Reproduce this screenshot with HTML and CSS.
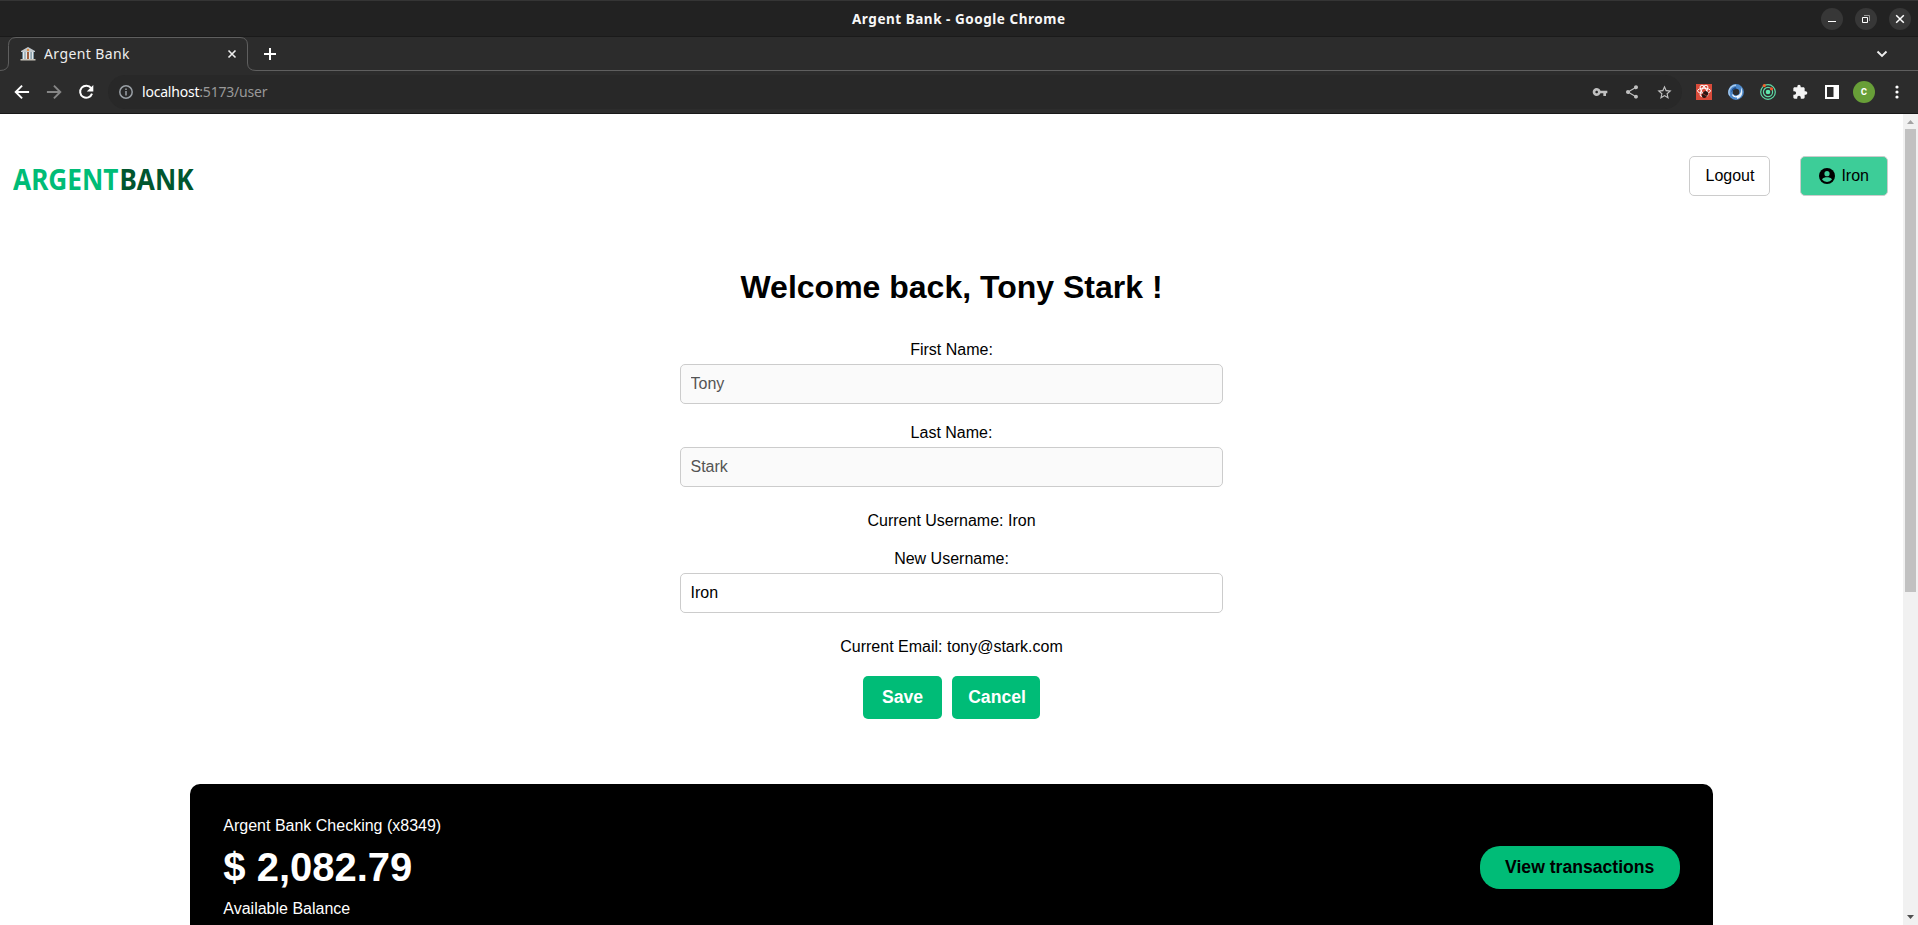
FILE: index.html
```html
<!DOCTYPE html>
<html lang="en">
<head>
<meta charset="utf-8">
<title>Argent Bank</title>
<link rel="stylesheet" href="styles.css">
</head>
<body>
<div class="window">
  <header class="titlebar">
    <svg class="window-title" width="216" height="24"><text x="1" y="17" textLength="213">Argent Bank - Google Chrome</text></svg>
    <div class="window-controls">
      <svg width="22" height="22" viewBox="0 0 22 22"><circle cx="11" cy="11" r="11" fill="#373737"/><path d="M7 13.5h8" stroke="#fff"/></svg>
      <svg width="22" height="22" viewBox="0 0 22 22"><circle cx="11" cy="11" r="11" fill="#373737"/><path d="M7.500 9.500h5v5h-5z" fill="none" stroke="#fff"/><path d="M9 7.500h5.500v5.500" fill="none" stroke="#999"/></svg>
      <svg width="22" height="22" viewBox="0 0 22 22"><circle cx="11" cy="11" r="11" fill="#373737"/><path d="M7.200 7.200l7.600 7.600M14.800 7.200l-7.600 7.600" stroke="#fff" stroke-width="1.500"/></svg>
    </div>
  </header>

  <div class="tabstrip">
    <svg class="tab-outline" width="1918" height="35" viewBox="0 0 1918 35"><path d="M0 33.500Q8.500 33.500 8.500 26V8.500Q8.500 .5 16 .5H240Q247.500 .5 247.500 8V26Q247.500 33.500 256 33.500H1918" fill="none" stroke="#5f5f5f"/></svg>
    <div class="tab">
      <svg width="16" height="16" viewBox="0 0 16 16"><path d="M8 1L1 5v1h14V5z" fill="#c3cace"/><path d="M2 6h12v7H2z" fill="#6b8796"/><path d="M3 6h1.500v7H3zM5.500 6H7v7H5.500zM9 6h1.500v7H9zM11.700 6h1.500v7h-1.500z" fill="#e4e8e8"/><path d="M7 6h2v7H7z" fill="#a0603f"/><circle cx="8" cy="4" r="1.200" fill="#e08a3c"/><path d="M.5 13h15v1.500H.5z" fill="#c6c2b8"/></svg>
      <svg class="tab-title" width="90" height="22"><text x="0" y="16" textLength="85.500">Argent Bank</text></svg>
      <svg class="tab-close" width="10" height="10" viewBox="0 0 10 10"><path d="M1.500 1.500l7 7M8.500 1.500l-7 7" stroke="#eee" stroke-width="1.600"/></svg>
    </div>
    <svg class="new-tab" width="14" height="14" viewBox="0 0 14 14"><path d="M7 1v12M1 7h12" stroke="#fff" stroke-width="2"/></svg>
    <svg class="tab-search" width="12" height="8" viewBox="0 0 12 8"><path d="M1.500 1.500L6 6l4.500-4.500" fill="none" stroke="#eee" stroke-width="1.900"/></svg>
  </div>

  <div class="toolbar">
    <div class="nav-icons">
      <svg width="20" height="20" viewBox="0 0 24 24"><path fill="#fff" d="M20.500 10.800H7.300l5.600-5.600L11.300 3.500 2.800 12l8.500 8.500 1.600-1.700-5.600-5.600h13.200z"/></svg>
      <svg width="20" height="20" viewBox="0 0 24 24"><path fill="#868686" d="M3.500 10.800h13.200l-5.600-5.600 1.600-1.700 8.500 8.500-8.500 8.500-1.600-1.700 5.600-5.600H3.500z"/></svg>
      <svg width="20" height="20" viewBox="0 0 24 24"><path d="M18.200 7.400A7.300 7.300 0 1 0 19.200 14" fill="none" stroke="#fff" stroke-width="2.400"/><path d="M20.800 3.500v7.900h-7.900z" fill="#fff"/></svg>
    </div>
    <div class="omnibox">
      <svg width="14" height="14" viewBox="0 0 14 14"><circle cx="7" cy="7" r="6.200" fill="none" stroke="#9aa0a6" stroke-width="1.500"/><path d="M7 6v4.500M7 3.400v1.500" stroke="#9aa0a6" stroke-width="1.500"/></svg>
      <svg class="url" width="130" height="24"><text x="1" y="17" textLength="125.500"><tspan fill="#fff">localhost</tspan><tspan>:5173/user</tspan></text></svg>
      <div class="omnibox-actions">
        <svg width="16" height="16" viewBox="0 0 24 24"><path fill="#c0c0c0" d="M12.700 10C11.800 7.700 9.600 6 7 6c-3.300 0-6 2.700-6 6s2.700 6 6 6c2.600 0 4.800-1.700 5.700-4H17v4h4v-4h2v-4zM7 14c-1.100 0-2-.9-2-2s.9-2 2-2 2 .9 2 2-.9 2-2 2z"/></svg>
        <svg width="16" height="16" viewBox="0 0 24 24"><path fill="#c0c0c0" d="M18 16.100c-.8 0-1.400.3-2 .8l-7.100-4.200c.1-.5.100-.9 0-1.400L16 7.200c.5.500 1.200.8 2 .8 1.700 0 3-1.300 3-3s-1.300-3-3-3-3 1.300-3 3c0 .2 0 .5.100.7L8 9.800C7.500 9.300 6.800 9 6 9c-1.700 0-3 1.300-3 3s1.300 3 3 3c.8 0 1.500-.3 2-.8l7.100 4.200c0 .2-.1.400-.1.600 0 1.600 1.300 2.900 3 2.900s2.900-1.300 2.900-2.900-1.300-2.900-2.900-2.900z"/></svg>
        <svg width="17" height="17" viewBox="0 0 24 24"><path fill="#c0c0c0" d="M22 9.240l-7.190-.62L12 2 9.190 8.630 2 9.240l5.460 4.730L5.820 21 12 17.270 18.180 21l-1.630-7.030zM12 15.400l-3.760 2.270 1-4.280-3.320-2.880 4.380-.38L12 6.100l1.710 4.040 4.380.38-3.320 2.880 1 4.280z"/></svg>
      </div>
    </div>
    <div class="extensions">
      <svg width="16" height="16" viewBox="0 0 16 16"><path d="M0 0h16v16H0z" fill="#d94b3a"/><g fill="none" stroke="#fff" stroke-width="1"><ellipse cx="8" cy="6.800" rx="6.500" ry="2.600"/><ellipse cx="8" cy="6.800" rx="6" ry="2.500" transform="rotate(60 8 6.800)"/><ellipse cx="8" cy="6.800" rx="6" ry="2.500" transform="rotate(-60 8 6.800)"/></g><ellipse cx="9" cy="10.500" rx="2.700" ry="3.600" transform="rotate(35 9 10.500)" fill="#2a1512"/><path d="M6.500 9.500l5 3" stroke="#d94b3a" stroke-width=".6"/></svg>
      <svg width="16" height="16" viewBox="0 0 16 16"><circle cx="8" cy="8" r="5.600" fill="none" stroke="#4d88c9" stroke-width="4.600"/><path d="M1.800 11.500A7 7 0 0 1 8 1.200" fill="none" stroke="#a9cbec" stroke-width="1.400"/><path d="M9 15C14 14 15.800 8 13 3.600 13.500 8 12.500 10.500 9 12z" fill="#e4effa"/><path d="M8 3.200C5 3.200 3.200 5.500 3.500 8.500 4.500 6 6 5 8.500 5z" fill="#1c4c8c"/><path d="M4.500 10.500c1 2.400 4 3 5.500 1.500" fill="none" stroke="#fff" stroke-width="1.200"/></svg>
      <svg width="16" height="16" viewBox="0 0 16 16"><g fill="none" stroke="#5edba5" stroke-width="1.200"><circle cx="8" cy="8" r="7.300"/><circle cx="8" cy="8" r="4.600"/></g><circle cx="8" cy="8" r="2.300" fill="#61e8ad"/><circle cx="4.300" cy="1.600" r="1.600" fill="#f3642d"/><circle cx="11.500" cy="4.800" r="1.600" fill="#f3542d"/></svg>
      <svg width="16" height="16" viewBox="0 0 24 24"><path fill="#f4f4f4" d="M20.500 11H19V7c0-1.100-.9-2-2-2h-4V3.500a2.500 2.500 0 0 0-5 0V5H4c-1.100 0-2 .9-2 2v3.800h1.500a2.700 2.700 0 0 1 0 5.400H2V20c0 1.100.9 2 2 2h3.800v-1.500a2.700 2.700 0 0 1 5.400 0V22H17c1.100 0 2-.9 2-2v-4h1.500a2.500 2.500 0 0 0 0-5z"/></svg>
      <svg width="16" height="16" viewBox="0 0 16 16"><path d="M2 2h12v12H2z" fill="none" stroke="#fff" stroke-width="2"/><path d="M9.500 2H14v12H9.500z" fill="#fff"/></svg>
      <div class="avatar">c</div>
      <svg class="menu" width="4" height="14" viewBox="0 0 4 14"><g fill="#fff"><circle cx="2" cy="2" r="1.600"/><circle cx="2" cy="7" r="1.600"/><circle cx="2" cy="12" r="1.600"/></g></svg>
    </div>
  </div>

  <div class="viewport">
    <div class="page">
      <nav class="main-nav">
        <svg class="logo" width="184" height="44"><text x="0" y="32" textLength="105.500" lengthAdjust="spacingAndGlyphs" fill="#00bc77">ARGENT</text><text x="106.500" y="32" textLength="74" lengthAdjust="spacingAndGlyphs" fill="#00562f">BANK</text></svg>
        <div class="nav-links">
          <a class="nav-link">Logout</a>
          <a class="nav-link nav-user"><svg width="16" height="16" viewBox="0 0 16 16"><circle cx="8" cy="8" r="8"/><circle cx="8" cy="5.700" r="2.600" fill="#3dcd98"/><path d="M3 11.500C4 9.500 6 9.200 8 9.200s4 .3 5 2.300A6.300 6.300 0 0 1 8 14a6.300 6.300 0 0 1-5-2.500z" fill="#3dcd98"/></svg>Iron</a>
        </div>
      </nav>
      <main>
        <section class="profile">
          <h1>Welcome back, Tony Stark !</h1>
          <div class="field"><label for="first">First Name:</label><input id="first" value="Tony" disabled></div>
          <div class="field"><label for="last">Last Name:</label><input id="last" value="Stark" disabled></div>
          <p class="current">Current Username: Iron</p>
          <div class="field"><label for="username">New Username:</label><input id="username" value="Iron"></div>
          <p class="current">Current Email: tony@stark.com</p>
          <div class="actions"><button class="save">Save</button><button class="cancel">Cancel</button></div>
        </section>
        <section class="account">
          <div>
            <h3>Argent Bank Checking (x8349)</h3>
            <p class="amount">$ 2,082.79</p>
            <p class="description">Available Balance</p>
          </div>
          <button class="transactions">View transactions</button>
        </section>
      </main>
    </div>
    <div class="scrollbar">
      <svg width="15" height="15" viewBox="0 0 15 15"><path d="M4 10h7L7.500 6z" fill="#a3a3a3"/></svg>
      <div class="thumb"></div>
      <svg class="down" width="15" height="15" viewBox="0 0 15 15"><path d="M4 5h7L7.500 9z" fill="#505050"/></svg>
    </div>
  </div>
</div>
</body>
</html>
```

FILE: styles.css
```css
* { box-sizing: border-box; }
body { margin: 0; font-family: "Liberation Sans", Arial, sans-serif; font-size: 16px; color: #000; }
svg { display: block; flex: none; }
h1, h3, p { margin: 0; }

.window { height: 100vh; display: flex; flex-direction: column; overflow: hidden; background: #2c2c2c; }

.titlebar { flex: none; height: 36px; display: grid; grid-template-columns: 1fr auto 1fr; align-items: center; background: #222; border-top: 1px solid #353535; }
.window-title { grid-column: 2; margin-top: 1px; font: 700 13.500px "Noto Sans", sans-serif; fill: #f7f7f7; }
.window-controls { justify-self: end; display: flex; gap: 12px; padding-right: 7px; }

.tabstrip { flex: none; position: relative; height: 35px; display: flex; align-items: center; border-top: 1px solid #1a1a1a; }
.tab-outline { position: absolute; left: 0; top: 0; }
.tab { width: 248px; height: 34px; padding: 0 11px 0 20px; display: flex; align-items: center; gap: 8px; }
.tab-title { font: 14px "Noto Sans", sans-serif; fill: #eee; }
.tab-close { margin-left: auto; }
.new-tab { margin-left: 15px; }
.tab-search { margin: 0 30px 0 auto; }

.toolbar { flex: none; height: 43px; display: flex; align-items: center; border-bottom: 1px solid #181818; }
.nav-icons { width: 108px; padding-left: 12px; display: flex; gap: 12px; }
.omnibox { width: 1574px; height: 34px; padding: 0 9px 0 11px; display: flex; align-items: center; border-radius: 17px; background: #282828; }
.url { margin-left: 8px; font: 14px "Noto Sans", sans-serif; fill: #999; }
.omnibox-actions { margin-left: auto; display: flex; align-items: center; gap: 16px; }
.extensions { display: flex; align-items: center; gap: 16px; padding-left: 14px; }
.avatar { width: 22px; height: 22px; margin: 0 -3px; border-radius: 50%; background: #689f38; color: #fff; font: 500 12px/21px Roboto, sans-serif; text-align: center; }
.menu { margin-left: 7px; }

.viewport { flex: 1; min-height: 0; display: flex; background: #fff; }
.page { flex: 1; overflow: hidden; }
.main-nav { height: 124px; display: flex; justify-content: space-between; align-items: center; padding: 0 15px 0 13px; }
.logo { margin-top: 8px; font: 700 28px "Noto Sans", sans-serif; }
.nav-links { display: flex; gap: 30px; }
.nav-link { height: 40px; display: flex; align-items: center; gap: 5px; padding: 0 15px; border: 1px solid #ccc; border-radius: 5px; }
.nav-user { background: #3dcd98; padding: 0 18px; gap: 6px; }

.profile { width: 543px; margin: 0 auto; padding-top: 31px; text-align: center; }
h1 { font-size: 32px; line-height: 37px; margin-bottom: 35px; }
.field { display: flex; flex-direction: column; gap: 5px; margin-bottom: 20px; }
label { line-height: 18px; }
input { width: 100%; height: 40px; padding: 0 9.500px; border: 1px solid #ccc; border-radius: 5px; background: #fff; color: #000; font: inherit; }
input:disabled { background: #fafafa; color: #545454; }
.current { line-height: 18px; margin: 25px 0 20px; }
.actions { display: flex; justify-content: center; gap: 10px; }
button { height: 43px; border: 0; font: 700 17.600px "Liberation Sans", Arial, sans-serif; background: #00bc77; padding: 0; }
.actions button { color: #fff; border-radius: 5px; }
.save { width: 79px; }
.cancel { width: 88px; padding-left: 2px; }

.account { width: 80%; height: 181px; margin: 65px auto 0; padding: 33px 33px 32px; display: flex; justify-content: space-between; background: #000; color: #fff; border-radius: 10px; }
.account h3 { font-size: 16px; font-weight: 400; line-height: 18px; }
.amount { font-size: 40px; font-weight: 700; line-height: 46px; margin: 9px 0 10px; }
.description { line-height: 18px; }
.transactions { align-self: flex-start; margin-top: 29px; width: 200px; border-radius: 20px; color: #000; }

.scrollbar { flex: none; width: 15px; display: flex; flex-direction: column; background: #f1f1f1; }
.thumb { height: 463px; margin: 0 2px; background: #c1c1c1; }
.down { margin-top: auto; }
```
